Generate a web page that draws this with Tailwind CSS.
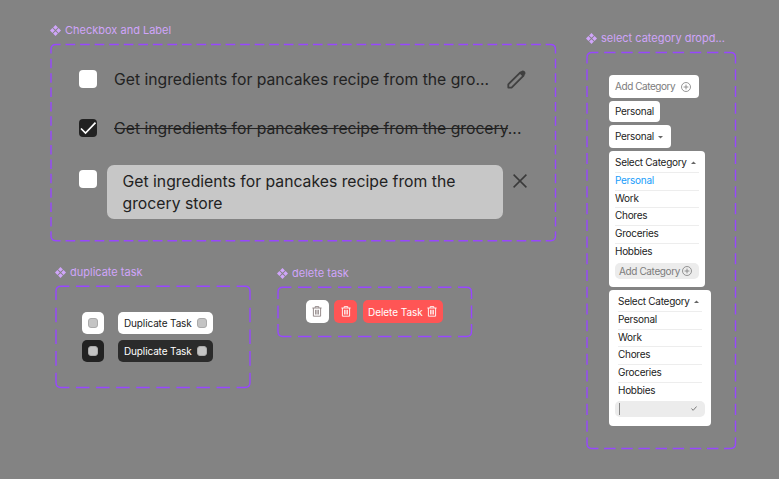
<!DOCTYPE html>
<html lang="en">
<head>
<meta charset="utf-8">
<title>Task components</title>
<script src="https://cdn.jsdelivr.net/npm/@tailwindcss/browser@4"></script>
</head>
<body class="relative w-[779px] h-[479px] overflow-hidden bg-[#838383] font-['Inter',sans-serif] text-[#222] whitespace-nowrap">
<svg class="hidden">
  <symbol id="component" viewBox="0 0 10 10"><path fill="#d0a5fa" d="M5 0 7.2 2.2 5 4.4 2.8 2.2ZM5 5.6 7.2 7.8 5 10 2.8 7.8ZM2.2 2.8 4.4 5 2.2 7.2 0 5ZM7.8 2.8 10 5 7.8 7.2 5.6 5Z"/></symbol>
  <symbol id="trash" viewBox="0 0 10 11"><g fill="none" stroke="currentColor" stroke-width=".9"><path d="M.4 2H9.6M3.2 1.8V.6H6.8V1.8M1.4 2V10.2H8.6V2M3.6 3.8V8.5M5 3.8V8.5M6.4 3.8V8.5"/></g></symbol>
  <symbol id="plus" viewBox="0 0 10 10"><path fill="none" stroke="#7c7c7c" stroke-width=".8" d="M5 .5A4.5 4.5 0 1 1 5 9.5A4.5 4.5 0 1 1 5 .5M5 2.6V7.4M2.6 5H7.4"/></symbol>
</svg>

<!-- Checkbox and label -->
<section class="absolute left-[50px] top-[23px] w-[507px] h-[219px]">
  <h2 class="flex items-center gap-1 h-[14px] text-[11px] text-[#d0a5fa]"><svg class="size-[11px]"><use href="#component"/></svg>Checkbox and Label</h2>
  <svg class="absolute left-0 top-[20px] w-[507px] h-[199px]" fill="none" stroke="#9747ff" stroke-width="1.4">
    <path d="M1 10.5V6.5Q1 1.5 6 1.5H10.5M496 1.5H500.5Q505.5 1.5 505.5 6.5V10.5M505.5 188.5V192.7Q505.5 197.7 500.5 197.7H496M10.5 197.7H6Q1 197.7 1 192.7V188.5"/>
    <path stroke-dasharray="9.65 4.9" stroke-dashoffset="9.65" d="M10.65 1.5H496M10.65 197.7H496"/>
    <path stroke-dasharray="9.5 4.87" stroke-dashoffset="9.5" d="M1 11V188.5M505.5 11V188.5"/>
  </svg>
  <div class="flex items-center mt-[32px] ml-[29px] h-[20px]">
    <span class="size-[18px] rounded-[4px] bg-white"></span>
    <span class="ml-[17px] w-[376px] pt-[2px] text-[15.73px]">Get ingredients for pancakes recipe from the gro...</span>
    <svg class="ml-[17px] size-[19px]" viewBox="0 0 19 19"><path fill="none" stroke="#404040" stroke-width="1.8" stroke-linejoin="round" d="M1.3 17.6V14.3L13.4 2.4 16.6 5.6 4.6 17.6Z"/><path fill="#404040" d="M12.2 3 14.5.9Q16-.1 17.9 1.5Q19 3.2 17.9 4.6L15.9 6.7Z"/></svg>
  </div>
  <div class="flex items-center mt-[29px] ml-[29px] h-[20px]">
    <span class="size-[18px] rounded-[4px] bg-[#222]"><svg viewBox="0 0 18 18" fill="none" stroke="white" stroke-width="1.7"><path d="M2 9.5 6.5 14 16.5 3.7"/></svg></span>
    <span class="ml-[17px] pt-[2px] text-[15.73px]"><span class="line-through">Get ingredients for pancakes recipe from the grocery</span>...</span>
  </div>
  <div class="flex mt-[27px] ml-[29px]">
    <span class="mt-[5px] size-[18px] rounded-[4px] bg-white"></span>
    <p class="ml-[10px] w-[396px] h-[54px] rounded-[7px] bg-[#c7c7c7] pl-[15.5px] pt-[6px] text-[15.75px] leading-[21.5px]">Get ingredients for pancakes recipe from the<br>grocery store</p>
    <svg class="ml-[10px] mt-[9px] size-[14px]" viewBox="0 0 14 14"><path stroke="#3a3a3a" stroke-width="1.5" d="M.6.6 13.4 13.4M13.4.6.6 13.4"/></svg>
  </div>
</section>

<!-- Duplicate task -->
<section class="absolute left-[55px] top-[265px] w-[197px] h-[124px]">
  <h2 class="flex items-center gap-1 h-[14px] text-[11px] text-[#d0a5fa]"><svg class="size-[11px]"><use href="#component"/></svg>duplicate task</h2>
  <svg class="absolute left-0 top-[20px] w-[197px] h-[104px]" fill="none" stroke="#9747ff" stroke-width="1.4">
    <path d="M1 15V6.2Q1 1.2 6 1.2H14.4M181.6 1.2H190Q195 1.2 195 6.2V15M195 88V97.5Q195 102.5 190 102.5H181.6M14.4 102.5H6Q1 102.5 1 97.5V88"/>
    <path stroke-dasharray="13.4 6.67" stroke-dashoffset="13.4" d="M14.4 1.2H181.6M14.4 102.5H181.6"/>
    <path stroke-dasharray="14.6 7.1" stroke-dashoffset="14.6" d="M1 15.6V88M195 15.6V88"/>
  </svg>
  <div class="grid grid-cols-[22px_95px] gap-x-[14px] gap-y-[6px] mt-[33px] ml-[27px] text-[10px] tracking-[-0.13px]">
    <span class="flex items-center justify-center h-[22px] rounded-[5px] bg-white"><i class="size-[10px] rounded-[3px] border border-[#aaa] bg-[#c4c4c4]"></i></span>
    <span class="flex items-center justify-between h-[22px] rounded-[5px] bg-white px-[6px]">Duplicate Task<i class="size-[10px] rounded-[3px] border border-[#aaa] bg-[#c4c4c4]"></i></span>
    <span class="flex items-center justify-center h-[22px] rounded-[5px] bg-[#222]"><i class="size-[10px] rounded-[3px] border border-[#aaa] bg-[#c4c4c4]"></i></span>
    <span class="flex items-center justify-between h-[22px] rounded-[5px] bg-[#2b2b2b] px-[6px] text-white">Duplicate Task<i class="size-[10px] rounded-[3px] border border-[#aaa] bg-[#c4c4c4]"></i></span>
  </div>
</section>

<!-- Delete task -->
<section class="absolute left-[277px] top-[266px] w-[196px] h-[72px]">
  <h2 class="flex items-center gap-1 h-[14px] text-[11px] text-[#d0a5fa]"><svg class="size-[11px]"><use href="#component"/></svg>delete task</h2>
  <svg class="absolute left-0 top-[20px] w-[196px] h-[52px]" fill="none" stroke="#9747ff" stroke-width="1.4">
    <path d="M1 13V6.2Q1 1.2 6 1.2H14.4M181.1 1.2H189.5Q194.5 1.2 194.5 6.2V13M194.5 38V45.5Q194.5 50.5 189.5 50.5H181.1M14.4 50.5H6Q1 50.5 1 45.5V38M1 19.5V32.5M194.5 19.5V32.5"/>
    <path stroke-dasharray="13.4 6.6" stroke-dashoffset="13.4" d="M14.4 1.2H181.6M14.4 50.5H181.6"/>
  </svg>
  <div class="flex mt-[20px] ml-[28.5px] text-[10px] tracking-[-0.05px] text-white">
    <span class="flex items-center justify-center w-[23px] h-[23px] rounded-[5px] bg-white text-[#8b8080]"><svg class="w-[10px] h-[11px]"><use href="#trash"/></svg></span>
    <span class="ml-[5.5px] flex items-center justify-center w-[23px] h-[23px] rounded-[5px] bg-[#ff5555]"><svg class="w-[10px] h-[11px]"><use href="#trash"/></svg></span>
    <span class="ml-[6px] flex items-center justify-between w-[80px] h-[23px] rounded-[5px] bg-[#ff5555] pl-[5px] pr-[6px]"><span class="pt-[2px]">Delete Task</span><svg class="w-[10px] h-[11px]"><use href="#trash"/></svg></span>
  </div>
</section>

<!-- Category dropdown -->
<section class="absolute left-[586px] top-[31px] w-[151px] h-[419px]">
  <h2 class="flex items-center gap-1 h-[14px] text-[11px] text-[#d0a5fa]"><svg class="size-[11px]"><use href="#component"/></svg>select category dropd...</h2>
  <svg class="absolute left-0 top-[20px] w-[151px] h-[399px]" fill="none" stroke="#9747ff" stroke-width="1.4">
    <path d="M1 12.5V6.5Q1 1.5 6 1.5H12.4M138.1 1.5H144.5Q149.5 1.5 149.5 6.5V12.5M149.5 386.5V392.5Q149.5 397.5 144.5 397.5H138.1M12.4 397.5H6Q1 397.5 1 392.5V386.5"/>
    <path stroke-dasharray="11.4 5.74" stroke-dashoffset="11.4" d="M12.4 1.5H138.1M12.4 397.5H138.1"/>
    <path stroke-dasharray="11.1 5.63" stroke-dashoffset="11.1" d="M1 12.6V386.5M149.5 12.6V386.5"/>
  </svg>
  <div class="flex flex-col items-start mt-[30px] ml-[23px] text-[10px] tracking-[-0.28px]">
    <span class="flex items-center justify-between w-[90px] h-[23px] rounded-[4px] bg-white pl-[6px] pr-[8px] tracking-[-0.44px] text-[#7c7c7c]">Add Category<svg class="size-[10px] shrink-0"><use href="#plus"/></svg></span>
    <span class="mt-[3px] flex items-center w-[51px] h-[21px] rounded-[4px] bg-white pl-[6px]">Personal</span>
    <span class="mt-[3px] flex items-center w-[62px] h-[23px] rounded-[4px] bg-white pl-[6px]">Personal<svg class="mt-[1px] ml-[4px] w-[5px] h-[3px]"><path fill="#666" d="M0 0H5L2.5 2.6Z"/></svg></span>
    <div class="mt-[3px] w-[96px] h-[136px] rounded-[4px] bg-white pl-[6px] pr-[6px] pt-[3px]">
      <div class="flex items-center justify-between h-[18px] pb-[2px] pr-[3px]">Select Category<svg class="w-[5px] h-[3px] shrink-0"><path fill="#666" d="M0 3H5L2.5.4Z"/></svg></div>
      <ul class="leading-[14px]">
        <li class="h-[17.7px] border-t border-[#ededed] text-[#189dfa]">Personal</li>
        <li class="h-[17.7px] border-t border-[#ededed]">Work</li>
        <li class="h-[17.7px] border-t border-[#ededed]">Chores</li>
        <li class="h-[17.7px] border-t border-[#ededed]">Groceries</li>
        <li class="h-[17.7px] border-t border-[#ededed]">Hobbies</li>
      </ul>
      <div class="mt-[2.5px] flex items-center justify-between h-[16px] rounded-[5px] bg-[#ececec] pl-[4px] pr-[7px] tracking-[-0.38px] text-[#7c7c7c]"><span class="pt-px">Add Category</span><svg class="size-[10px] shrink-0"><use href="#plus"/></svg></div>
    </div>
    <div class="mt-[3px] w-[101.5px] h-[136px] rounded-[4px] bg-white pl-[6px] pr-[6px] pt-[3px]">
      <div class="flex items-center justify-between h-[18px] pb-[2px] pl-[3px] pr-[6px]">Select Category<svg class="w-[5px] h-[3px] shrink-0"><path fill="#666" d="M0 3H5L2.5.4Z"/></svg></div>
      <ul class="ml-[3px] mr-[3px] leading-[14px]">
        <li class="h-[17.7px] border-t border-[#ededed]">Personal</li>
        <li class="h-[17.7px] border-t border-[#ededed]">Work</li>
        <li class="h-[17.7px] border-t border-[#ededed]">Chores</li>
        <li class="h-[17.7px] border-t border-[#ededed]">Groceries</li>
        <li class="h-[17.7px] border-t border-[#ededed]">Hobbies</li>
      </ul>
      <div class="mt-[1.5px] flex items-center justify-between h-[16px] rounded-[5px] bg-[#ececec] pl-[4px] pr-[8px]"><i class="w-px h-[12px] bg-[#888]"></i><svg class="w-[6px] h-[5px]"><path fill="none" stroke="#777" d="M.4 2.6 2.2 4.3 5.6.5"/></svg></div>
    </div>
  </div>
</section>
</body>
</html>
